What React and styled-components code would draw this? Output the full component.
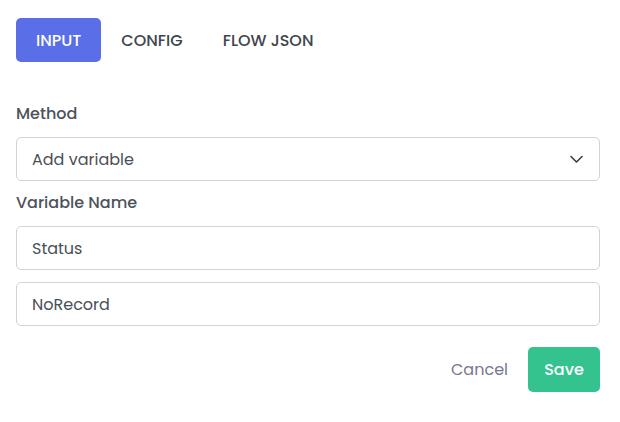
import styled, { createGlobalStyle } from 'styled-components'

const GlobalStyle = createGlobalStyle`
  body {
    margin: 0;
    background: #ffffff;
    font-family: Poppins, Inter, "Noto Sans", sans-serif;
    color: #495057;
  }
`

const Panel = styled.div`
  padding: 18px 20px 0 16px;
  width: 584px;
`

const Tabs = styled.nav`
  display: flex;
  align-items: center;
  gap: 0;
  margin-bottom: 40px;
`

const Tab = styled.button`
  height: 44px;
  padding: 0 20px;
  border: none;
  border-radius: 5px;
  font-family: inherit;
  font-size: 16px;
  font-weight: 500;
  background: ${p => (p.$active ? '#5a6ee8' : 'transparent')};
  color: ${p => (p.$active ? '#ffffff' : '#40464d')};
`

const Field = styled.div`
  display: flex;
  flex-direction: column;
  gap: 11px;
  margin-bottom: 10px;
`

const Label = styled.label`
  font-size: 16px;
  font-weight: 500;
  line-height: 24px;
  color: #4d535a;
`

const Box = styled.div`
  height: 44px;
  box-sizing: border-box;
  border: 1px solid #ced4da;
  border-radius: 5px;
  padding: 0 15px;
  display: flex;
  align-items: center;
  justify-content: space-between;
  font-size: 16px;
  color: #495057;
`

const Stack = styled.div`
  display: flex;
  flex-direction: column;
  gap: 12px;
`

const Footer = styled.div`
  display: flex;
  justify-content: flex-end;
  align-items: center;
  gap: 20px;
  margin-top: 21px;
`

const Cancel = styled.button`
  border: none;
  background: none;
  font-family: inherit;
  font-size: 16px;
  color: #74788d;
  padding: 0;
`

const Save = styled.button`
  width: 72px;
  height: 45px;
  border: none;
  border-radius: 5px;
  background: #34c38f;
  color: #ffffff;
  font-family: inherit;
  font-size: 16px;
  font-weight: 500;
`

const Chevron = () => (
  <svg width="15" height="14" viewBox="0 0 15 14" fill="none">
    <path d="M2 4.5l5.5 5.5L13 4.5" stroke="#343a40" strokeWidth="1.5" strokeLinecap="round" strokeLinejoin="round" />
  </svg>
)

export default function App() {
  return (
    <Panel>
      <GlobalStyle />
      <Tabs>
        <Tab $active>INPUT</Tab>
        <Tab>CONFIG</Tab>
        <Tab>FLOW JSON</Tab>
      </Tabs>
      <Field>
        <Label>Method</Label>
        <Box>
          Add variable
          <Chevron />
        </Box>
      </Field>
      <Field>
        <Label>Variable Name</Label>
        <Stack>
          <Box>Status</Box>
          <Box>NoRecord</Box>
        </Stack>
      </Field>
      <Footer>
        <Cancel>Cancel</Cancel>
        <Save>Save</Save>
      </Footer>
    </Panel>
  )
}
